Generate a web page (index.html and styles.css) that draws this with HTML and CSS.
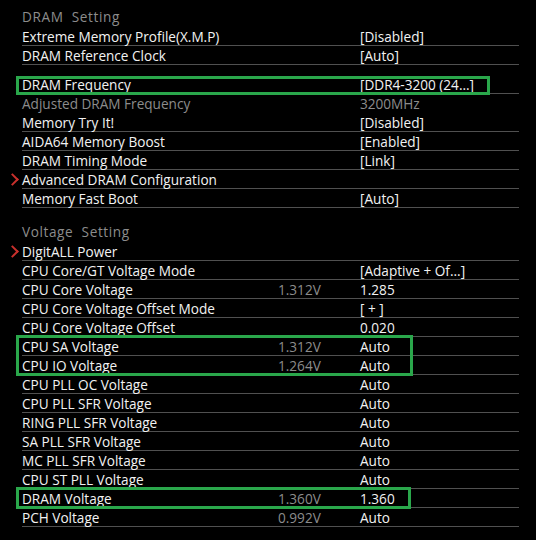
FILE: index.html
```html
<!DOCTYPE html>
<html lang="en">
<head>
  <meta charset="UTF-8">
  <title>OC - DRAM / Voltage Setting</title>
  <link rel="stylesheet" href="styles.css">
</head>
<body>

<div class="panel">
  <div class="section">DRAM&nbsp; Setting</div>
  <div class="row"><span class="name">Extreme Memory Profile(X.M.P)</span><span class="val">[Disabled]</span></div>
  <div class="row"><span class="name">DRAM Reference Clock</span><span class="val">[Auto]</span></div>

  <div class="group gap freq">
    <div class="row"><span class="name">DRAM Frequency</span><span class="val">[DDR4-3200 (24...]</span></div>
  </div>
  <div class="row dim noline"><span class="name">Adjusted DRAM Frequency</span><span class="val">3200MHz</span></div>
  <div class="row"><span class="name">Memory Try It!</span><span class="val">[Disabled]</span></div>
  <div class="row"><span class="name">AIDA64 Memory Boost</span><span class="val">[Enabled]</span></div>
  <div class="row"><span class="name">DRAM Timing Mode</span><span class="val">[Link]</span></div>
  <div class="row sub"><span class="name">Advanced DRAM Configuration</span></div>
  <div class="row"><span class="name">Memory Fast Boot</span><span class="val">[Auto]</span></div>

  <div class="section second">Voltage&nbsp; Setting</div>
  <div class="row sub"><span class="name">DigitALL Power</span></div>
  <div class="row"><span class="name">CPU Core/GT Voltage Mode</span><span class="val">[Adaptive + Of...]</span></div>
  <div class="row"><span class="name">CPU Core Voltage</span><span class="cur">1.312V</span><span class="val">1.285</span></div>
  <div class="row"><span class="name">CPU Core Voltage Offset Mode</span><span class="val">[ + ]</span></div>
  <div class="row"><span class="name">CPU Core Voltage Offset</span><span class="val">0.020</span></div>
  <div class="group sa">
    <div class="row"><span class="name">CPU SA Voltage</span><span class="cur">1.312V</span><span class="val">Auto</span></div>
    <div class="row"><span class="name">CPU IO Voltage</span><span class="cur">1.264V</span><span class="val">Auto</span></div>
  </div>
  <div class="row"><span class="name">CPU PLL OC Voltage</span><span class="val">Auto</span></div>
  <div class="row"><span class="name">CPU PLL SFR Voltage</span><span class="val">Auto</span></div>
  <div class="row"><span class="name">RING PLL SFR Voltage</span><span class="val">Auto</span></div>
  <div class="row"><span class="name">SA PLL SFR Voltage</span><span class="val">Auto</span></div>
  <div class="row"><span class="name">MC PLL SFR Voltage</span><span class="val">Auto</span></div>
  <div class="row"><span class="name">CPU ST PLL Voltage</span><span class="val">Auto</span></div>
  <div class="group dram">
    <div class="row"><span class="name">DRAM Voltage</span><span class="cur">1.360V</span><span class="val">1.360</span></div>
  </div>
  <div class="row"><span class="name">PCH Voltage</span><span class="cur">0.992V</span><span class="val">Auto</span></div>
</div>

</body>
</html>
```

FILE: styles.css
```css
:root {
  --bg: #000;
  --text: #f2f2f2;
  --muted: #8c8c8c;
  --line: #505050;
  --mark: #2aa74b;
  --arrow: #c9302c;
}

body {
  margin: 0;
  background: var(--bg);
  font-family: 'Open Sans', 'Noto Sans', sans-serif;
  font-size: 13.6px;
  color: var(--text);
}

.panel {
  width: 497px;
  margin-left: 22px;
}

.section {
  height: 19px;
  line-height: 19px;
  padding: 7px 0 1px;
  color: var(--muted);
  letter-spacing: 0.6px;
}

.section.second {
  margin-top: 7px;
}

.row {
  position: relative;
  display: flex;
  height: 18px;
  line-height: 19px;
  border-bottom: 1px solid var(--line);
  white-space: nowrap;
}

.row.noline {
  border-bottom-color: transparent;
}

.row.dim {
  color: var(--muted);
}

.name {
  width: 256px;
}

.cur {
  width: 82px;
  color: var(--muted);
}

.name + .val {
  margin-left: 82px;
}

/* red chevron for sub menus */
.sub::before {
  content: '';
  position: absolute;
  left: -14px;
  top: 5px;
  width: 7px;
  height: 7px;
  border-top: 2px solid var(--arrow);
  border-right: 2px solid var(--arrow);
  transform: rotate(45deg);
}

.gap {
  margin-top: 10px;
}

/* green frames around the changed items */
.group {
  position: relative;
}

.group::after {
  content: '';
  position: absolute;
  left: -6px;
  border: 3px solid var(--mark);
  pointer-events: none;
}

.freq::after {
  top: 1px;
  height: 13px;
  width: 468px;
}

.sa::after {
  top: -2px;
  height: 35px;
  width: 391px;
}

.dram::after {
  top: -2px;
  height: 16px;
  width: 389px;
}
```
